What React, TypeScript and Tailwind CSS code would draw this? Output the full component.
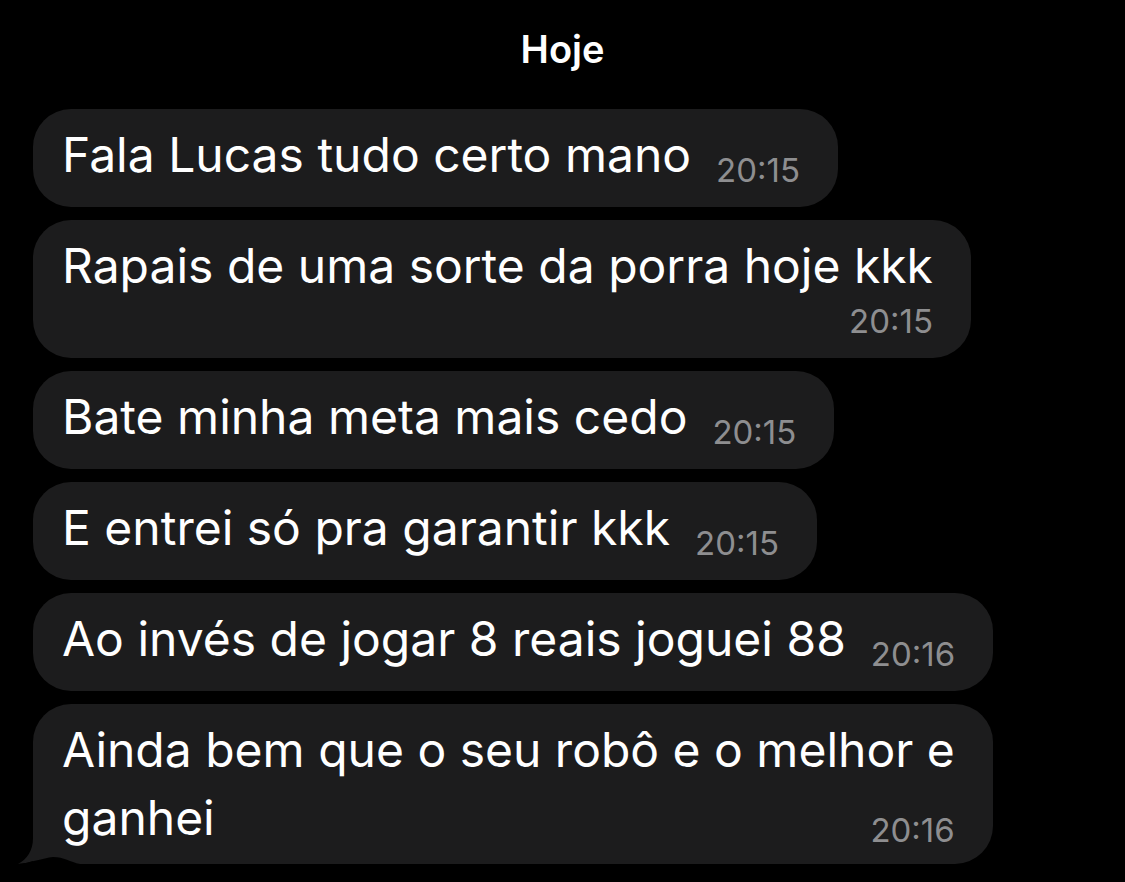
type Msg = {
  lines: string[];
  time: string;
  mode: "inline" | "below" | "last";
  tail?: boolean;
};

const messages: Msg[] = [
  { lines: ["Fala Lucas tudo certo mano"], time: "20:15", mode: "inline" },
  { lines: ["Rapais de uma sorte da porra hoje kkk"], time: "20:15", mode: "below" },
  { lines: ["Bate minha meta mais cedo"], time: "20:15", mode: "inline" },
  { lines: ["E entrei só pra garantir kkk"], time: "20:15", mode: "inline" },
  { lines: ["Ao invés de jogar 8 reais joguei 88"], time: "20:16", mode: "inline" },
  { lines: ["Ainda bem que o seu robô e o melhor e", "ganhei"], time: "20:16", mode: "last", tail: true },
];

function Time({ t, className = "" }: { t: string; className?: string }) {
  return (
    <span className={`relative text-[33px] leading-none text-[#8e8e90] whitespace-nowrap ${className}`}>{t}</span>
  );
}

function Tail() {
  return (
    <svg
      className="absolute left-[-15px] bottom-0"
      width="62"
      height="35"
      viewBox="0 0 62 35"
    >
      <path d="M15 0 L15 9 C15 22 9 30 0 35 C12 34 25 29 35 28 C46 28 52 33 62 35 L62 0 Z" fill="#1c1c1d" />
      <path d="M0 35 C12 34 25 29 35 28 C46 28 52 33 62 35 Z" fill="#000" />
    </svg>
  );
}

function Bubble({ m }: { m: Msg }) {
  if (m.mode === "inline") {
    return (
      <div className="inline-flex items-end gap-[25px] rounded-[38px] bg-[#1c1c1d] pl-[29px] pr-[38px] pt-[12px] pb-[18px]">
        <span className="leading-[68px] whitespace-nowrap">{m.lines[0]}</span>
        <Time t={m.time} className="mb-[2px]" />
      </div>
    );
  }
  if (m.mode === "below") {
    return (
      <div className="inline-flex flex-col rounded-[38px] bg-[#1c1c1d] pl-[29px] pr-[38px] pt-[12px] pb-[20px]">
        <span className="leading-[68px] whitespace-nowrap">{m.lines[0]}</span>
        <div className="flex justify-end mt-[5px]">
          <Time t={m.time} />
        </div>
      </div>
    );
  }
  return (
    <div className="relative inline-flex flex-col rounded-[38px] rounded-bl-none bg-[#1c1c1d] pl-[29px] pr-[38px] pt-[12px] pb-[12px]">
      {m.tail ? <Tail /> : null}
      <span className="relative leading-[68px] whitespace-nowrap">{m.lines[0]}</span>
      <div className="relative flex items-end justify-between gap-[25px]">
        <span className="leading-[68px] whitespace-nowrap">{m.lines[1]}</span>
        <Time t={m.time} className="mb-[5px]" />
      </div>
    </div>
  );
}

export default function App() {
  return (
    <div
      className="h-screen w-full overflow-hidden bg-black text-white"
      style={{ fontFamily: "Inter, 'Noto Sans', sans-serif" }}
    >
      <div className="pt-[30px] text-center text-[38px] leading-none font-semibold">Hoje</div>
      <div className="mt-[41px] flex flex-col items-start gap-[13px] pl-[33px] text-[48px]">
        {messages.map((m, i) => (
          <Bubble key={i} m={m} />
        ))}
      </div>
    </div>
  );
}
